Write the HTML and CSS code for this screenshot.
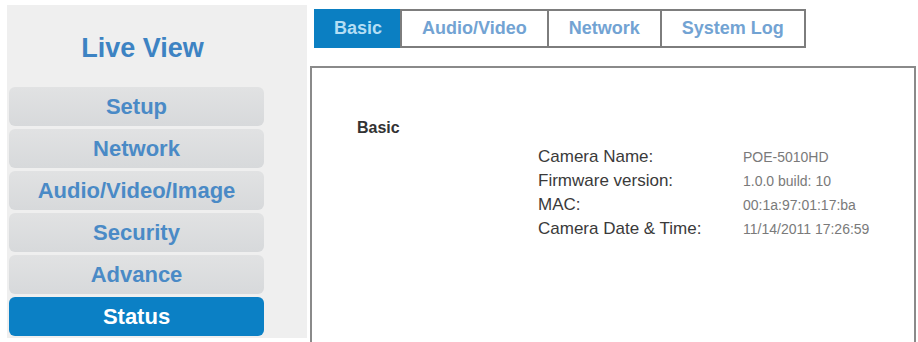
FILE: index.html
```html
<!DOCTYPE html>
<html lang="en">
<head>
<meta charset="utf-8">
<title>Status</title>
<link rel="stylesheet" href="styles.css">
</head>
<body>
<div class="page">
  <aside class="side">
    <div class="title">Live View</div>
    <nav class="menu">
      <div class="item">Setup</div>
      <div class="item">Network</div>
      <div class="item">Audio/Video/Image</div>
      <div class="item">Security</div>
      <div class="item">Advance</div>
      <div class="item active">Status</div>
    </nav>
  </aside>
  <main class="main">
    <div class="tabs">
      <div class="tab active">Basic</div>
      <div class="tab">Audio/Video</div>
      <div class="tab">Network</div>
      <div class="tab">System Log</div>
    </div>
    <section class="panel">
      <h2 class="heading">Basic</h2>
      <div class="info">
        <div class="label">Camera Name:</div><div class="value">POE-5010HD</div>
        <div class="label">Firmware version:</div><div class="value">1.0.0 build: 10</div>
        <div class="label">MAC:</div><div class="value">00:1a:97:01:17:ba</div>
        <div class="label">Camera Date &amp; Time:</div><div class="value">11/14/2011 17:26:59</div>
      </div>
    </section>
  </main>
</div>
</body>
</html>
```
FILE: styles.css
```css
html, body {
  margin: 0;
  padding: 0;
  background: #fff;
}
body {
  font-family: "Liberation Sans", Arial, sans-serif;
}
.page {
  display: flex;
  height: 342px;
  overflow: hidden;
}
.side {
  margin: 5px 0 0 7px;
  width: 300px;
  height: 333px;
  padding-left: 2px;
  box-sizing: border-box;
  background: #efefef;
  flex: none;
}
.title {
  width: 255px;
  height: 82px;
  box-sizing: border-box;
  padding: 4px 0 0 12px;
  display: flex;
  align-items: center;
  justify-content: center;
  font-size: 27px;
  font-weight: bold;
  color: #3d83c3;
}
.menu {
  display: flex;
  flex-direction: column;
  gap: 3px;
  width: 255px;
}
.item {
  height: 39px;
  border-radius: 6px;
  background: linear-gradient(#e1e2e3, #d7d9db);
  display: flex;
  align-items: center;
  justify-content: center;
  font-size: 22px;
  font-weight: bold;
  color: #4a8ac6;
}
.item.active {
  background: #0b80c5;
  color: #fff;
}
.main {
  flex: 1;
  margin-left: 3px;
  display: flex;
  flex-direction: column;
  min-width: 0;
}
.tabs {
  display: flex;
  margin: 9px 0 0 4px;
  height: 39px;
}
.tab {
  height: 39px;
  box-sizing: border-box;
  border: 2px solid #7d7d7d;
  margin-left: -2px;
  padding: 0 20px;
  display: flex;
  align-items: center;
  font-size: 18px;
  font-weight: bold;
  color: #72a3d3;
  background: #fff;
}
.tab.active {
  margin-left: 0;
  padding: 0 18px;
  background: #0b7fc2;
  border-color: #0b7fc2;
  color: #b3def4;
}
.panel {
  margin: 18px 2px 0 0;
  border: 2px solid #8a8a8a;
  border-bottom: none;
  flex: 1;
  padding: 50px 0 0 45px;
}
.heading {
  margin: 0;
  font-size: 16px;
  line-height: 20px;
  font-weight: bold;
  color: #333;
}
.info {
  display: grid;
  grid-template-columns: 205px auto;
  grid-auto-rows: 24px;
  align-items: center;
  margin: 7px 0 0 181px;
}
.label {
  font-size: 17px;
  color: #3a3a3a;
}
.value {
  font-size: 14px;
  color: #7a7a7a;
}
```
